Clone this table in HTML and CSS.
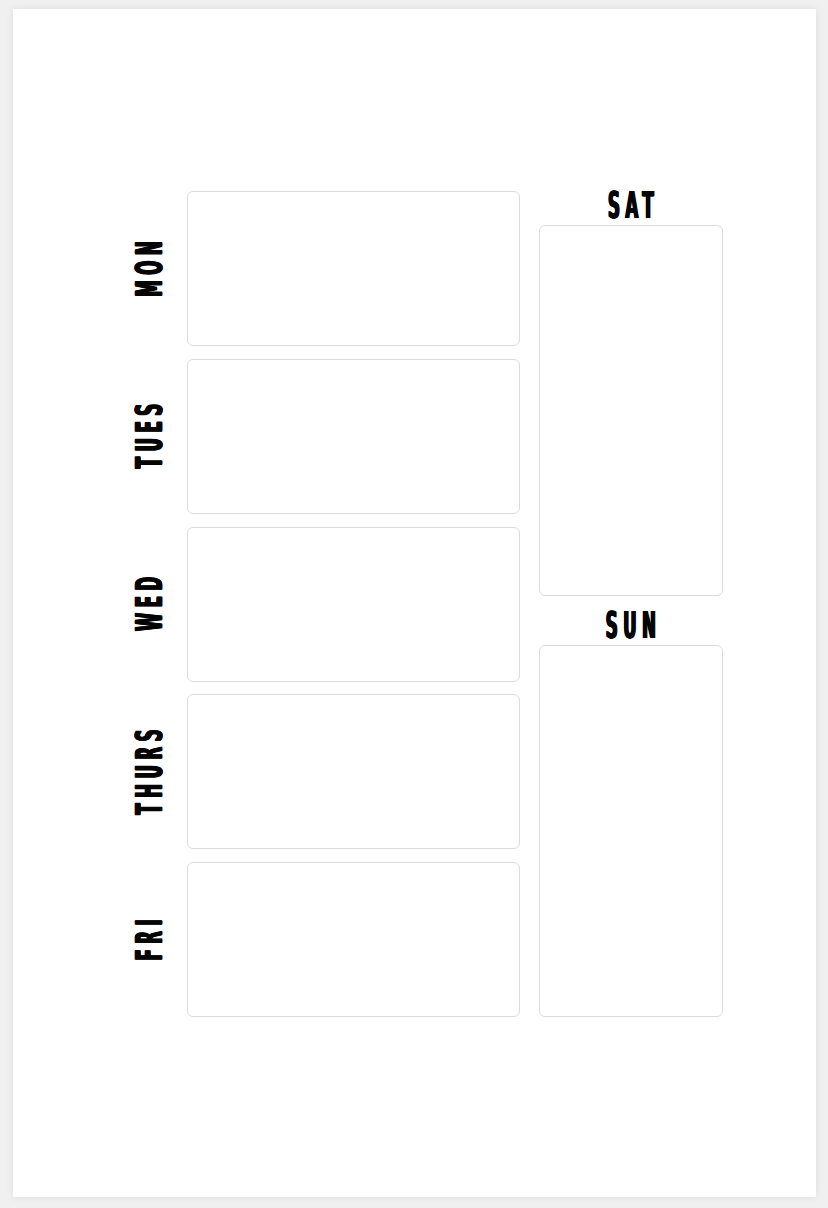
FILE: index.html
```html
<!DOCTYPE html>
<html lang="en">
<head>
<meta charset="utf-8">
<title>Weekly Planner</title>
<link rel="stylesheet" href="styles.css">
</head>
<body>
  <div class="sheet">
    <div class="planner">
      <div class="weekdays">
        <div class="day-row"><div class="side-label"><span class="txt">MON</span></div><div class="box day-box"></div></div>
        <div class="day-row"><div class="side-label"><span class="txt">TUES</span></div><div class="box day-box"></div></div>
        <div class="day-row"><div class="side-label"><span class="txt">WED</span></div><div class="box day-box"></div></div>
        <div class="day-row"><div class="side-label"><span class="txt">THURS</span></div><div class="box day-box"></div></div>
        <div class="day-row"><div class="side-label"><span class="txt">FRI</span></div><div class="box day-box"></div></div>
      </div>
      <div class="weekend">
        <div class="top-label"><span class="txt">SAT</span></div>
        <div class="box end-box sat"></div>
        <div class="top-label sun-label"><span class="txt">SUN</span></div>
        <div class="box end-box sun"></div>
      </div>
    </div>
  </div>
</body>
</html>
```

FILE: styles.css
```css
html, body {
  margin: 0;
  padding: 0;
}
body {
  background: #f0f0f0;
  padding: 9px 12px 11px 13px;
  box-sizing: border-box;
  width: 828px;
  height: 1208px;
}
.sheet {
  width: 803px;
  height: 1188px;
  background: #ffffff;
  box-shadow: 0 0 8px rgba(0, 0, 0, 0.08);
  box-sizing: border-box;
  padding: 182px 0 0 112px;
}
.planner {
  display: flex;
  gap: 19px;
  align-items: flex-start;
}
.weekdays {
  display: flex;
  flex-direction: column;
  gap: 12.75px;
}
.day-row {
  display: flex;
  gap: 12px;
}
.box {
  box-sizing: border-box;
  border: 1.5px solid #dcdcdc;
  border-radius: 6px;
  background: #fff;
}
.day-box {
  width: 333px;
  height: 155px;
}
.side-label {
  width: 50px;
  display: flex;
  align-items: center;
  justify-content: center;
}
.txt {
  display: inline-block;
  flex-shrink: 0;
  white-space: nowrap;
  font-family: "DejaVu Sans", sans-serif;
  font-weight: bold;
  font-size: 37px;
  line-height: 30px;
  letter-spacing: 12px;
  padding-left: 12px;
  color: #050505;
  text-shadow: -1.5px 0 0 #050505, -0.75px 0 0 #050505, 0.75px 0 0 #050505, 1.5px 0 0 #050505;
}
.side-label .txt {
  transform: rotate(-90deg) scaleX(0.45);
}
.top-label .txt {
  transform: scaleX(0.45);
}
.weekend {
  width: 184px;
  display: flex;
  flex-direction: column;
}
.top-label {
  height: 34px;
  display: flex;
  justify-content: center;
  align-items: flex-start;
}
.sun-label {
  margin-top: 15px;
}
.end-box {
  width: 184px;
}
.sat {
  height: 371px;
}
.sun {
  height: 372px;
}
```
